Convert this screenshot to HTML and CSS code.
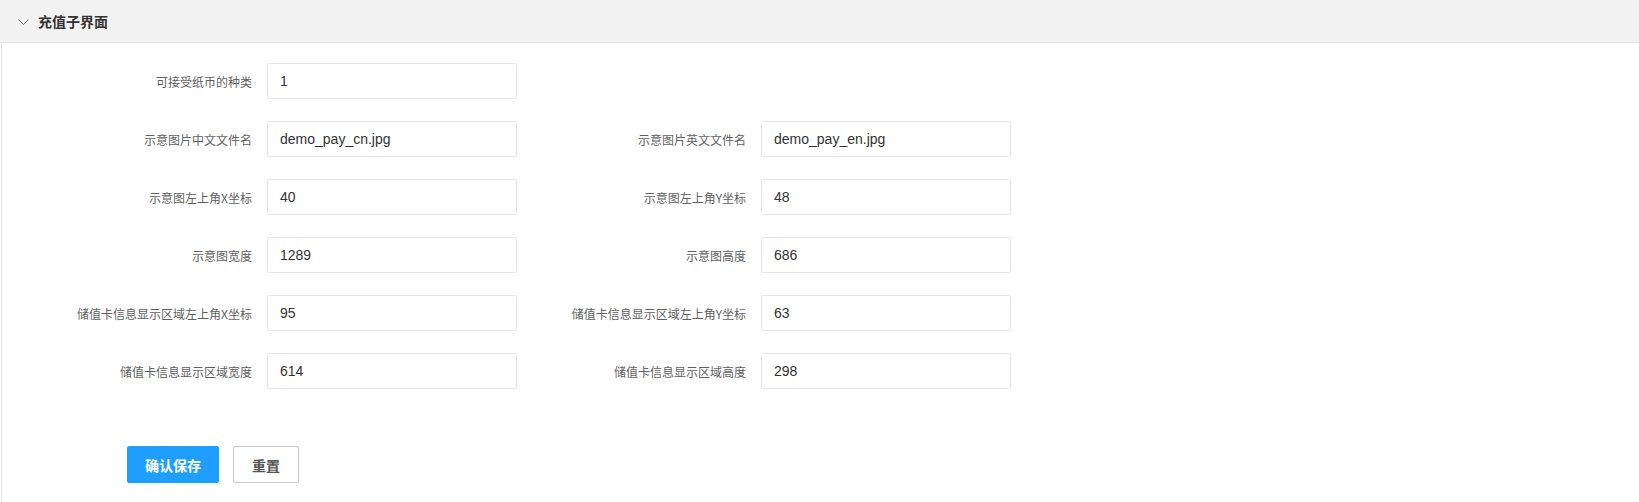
FILE: index.html
```html
<!DOCTYPE html>
<html lang="zh-CN">
<head>
<meta charset="utf-8">
<title>充值子界面</title>
<link rel="stylesheet" href="styles.css">
</head>
<body>
<div class="panel">
  <div class="panel-title">
    <svg class="chevron" width="11" height="6" viewBox="0 0 11 6"><polyline points="0.5,0.5 5.5,5.5 10.5,0.5" fill="none" stroke="#666" stroke-width="1"/></svg>
    <span>充值子界面</span>
  </div>
  <div class="panel-body">
    <form class="form">
      <div class="row">
        <div class="item"><label class="label">可接受纸币的种类</label><input class="input" value="1"></div>
      </div>
      <div class="row">
        <div class="item"><label class="label">示意图片中文文件名</label><input class="input" value="demo_pay_cn.jpg"></div>
        <div class="item"><label class="label">示意图片英文文件名</label><input class="input" value="demo_pay_en.jpg"></div>
      </div>
      <div class="row">
        <div class="item"><label class="label">示意图左上角X坐标</label><input class="input" value="40"></div>
        <div class="item"><label class="label">示意图左上角Y坐标</label><input class="input" value="48"></div>
      </div>
      <div class="row">
        <div class="item"><label class="label">示意图宽度</label><input class="input" value="1289"></div>
        <div class="item"><label class="label">示意图高度</label><input class="input" value="686"></div>
      </div>
      <div class="row">
        <div class="item"><label class="label">储值卡信息显示区域左上角X坐标</label><input class="input" value="95"></div>
        <div class="item"><label class="label">储值卡信息显示区域左上角Y坐标</label><input class="input" value="63"></div>
      </div>
      <div class="row">
        <div class="item"><label class="label">储值卡信息显示区域宽度</label><input class="input" value="614"></div>
        <div class="item"><label class="label">储值卡信息显示区域高度</label><input class="input" value="298"></div>
      </div>
      <div class="actions">
        <button type="button" class="btn btn-primary">确认保存</button>
        <button type="button" class="btn btn-default">重置</button>
      </div>
    </form>
  </div>
</div>
</body>
</html>
```

FILE: styles.css
```css
html, body {
  margin: 0;
  padding: 0;
  background: #fff;
  font-family: "Liberation Sans", "Noto Sans CJK SC", sans-serif;
  color: #333;
}

.panel {
  width: 100%;
  height: 502px;
  overflow: hidden;
}

.panel-title {
  height: 42px;
  background: #f2f2f2;
  border-bottom: 1px solid #e2e2e2;
  display: flex;
  align-items: center;
  padding-left: 18px;
  font-family: "Noto Sans CJK SC", sans-serif;
  font-size: 14px;
  font-weight: bold;
  color: #333;
}

.chevron {
  margin-right: 9px;
  margin-top: 1px;
}

.panel-body {
  margin-left: 1px;
  border-left: 1px solid #e6e6e6;
  padding: 20px 0 40px 50px;
  height: 460px;
  box-sizing: border-box;
}

.form {
  display: flex;
  flex-direction: column;
  gap: 22px;
}

.row {
  display: flex;
}

.item {
  width: 494px;
  display: flex;
  align-items: center;
}

.label {
  width: 215px;
  padding-right: 15px;
  box-sizing: border-box;
  text-align: right;
  font-family: "Noto Sans CJK SC", sans-serif;
  font-size: 12px;
  color: #5f5f5f;
  white-space: nowrap;
}

.input {
  width: 250px;
  height: 36px;
  box-sizing: border-box;
  border: 1px solid #e6e6e6;
  border-radius: 2px;
  padding: 0 12px;
  font-family: "Liberation Sans", sans-serif;
  font-size: 14px;
  color: #333;
  background: #fff;
  outline: none;
}

.actions {
  margin-top: 35px;
  padding-left: 75px;
  display: flex;
  gap: 14px;
}

.btn {
  height: 37px;
  padding: 0;
  border-radius: 2px;
  font-family: "Noto Sans CJK SC", sans-serif;
  font-size: 14px;
  font-weight: bold;
  cursor: pointer;
}

.btn-primary {
  width: 92px;
  background: #1e9fff;
  border: 1px solid #1e9fff;
  color: #fff;
}

.btn-default {
  width: 66px;
  background: #fff;
  border: 1px solid #c9c9c9;
  color: #555;
}
```
